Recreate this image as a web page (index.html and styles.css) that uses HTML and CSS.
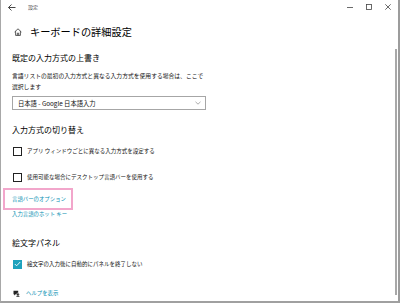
FILE: index.html
```html
<!DOCTYPE html>
<html lang="ja">
<head>
<meta charset="utf-8">
<link rel="stylesheet" href="styles.css">
</head>
<body>
<div class="window">
  <div class="titlebar">
    <svg class="back" width="8" height="7" viewBox="0 0 8 7"><path d="M0.5 3.5H7.5M3.5 0.5L0.5 3.5L3.5 6.5" fill="none" stroke="#333" stroke-width="0.9"/></svg>
    <span class="apptitle">設定</span>
    <div class="controls">
      <svg width="6" height="6" viewBox="0 0 6 6"><path d="M0 3.5H6" stroke="#444" stroke-width="0.8"/></svg>
      <svg width="6" height="6" viewBox="0 0 6 6"><rect x="0.5" y="0.5" width="5" height="5" fill="none" stroke="#444" stroke-width="0.8"/></svg>
      <svg width="6" height="6" viewBox="0 0 6 6"><path d="M0.3 0.3L5.7 5.7M5.7 0.3L0.3 5.7" stroke="#444" stroke-width="0.8"/></svg>
    </div>
  </div>
  <div class="body">
    <div class="content">
      <div class="header">
        <svg class="home" width="8" height="8" viewBox="0 0 8 8"><path d="M0.6 4L4 0.8L7.4 4M1.6 3.2V7.4H6.4V3.2M3.3 7.4V5.2H4.7V7.4" fill="none" stroke="#333" stroke-width="0.8"/></svg>
        <h1 class="pagetitle">キーボードの詳細設定</h1>
      </div>

      <h2 class="section first">既定の入力方式の上書き</h2>
      <p class="desc">言語リストの最初の入力方式と異なる入力方式を使用する場合は、ここで<br>選択します</p>
      <div class="select">
        <span>日本語 - Google 日本語入力</span>
        <svg width="6" height="4" viewBox="0 0 6 4"><path d="M0.5 0.8L3 3.2L5.5 0.8" fill="none" stroke="#888" stroke-width="0.7"/></svg>
      </div>

      <h2 class="section s2">入力方式の切り替え</h2>
      <div class="check c1"><span class="box"></span><span class="label">アプリ ウィンドウごとに異なる入力方式を設定する</span></div>
      <div class="check c2"><span class="box"></span><span class="label">使用可能な場合にデスクトップ言語バーを使用する</span></div>

      <div class="linkwrap">
        <a class="link l1">言語バーのオプション</a>
        <span class="highlight"></span>
      </div>
      <a class="link l2">入力言語のホット キー</a>

      <h2 class="section s3">絵文字パネル</h2>
      <div class="check c3"><span class="box checked"><svg width="7" height="6" viewBox="0 0 7 6"><path d="M0.8 3L2.6 4.8L6.2 1" fill="none" stroke="#fff" stroke-width="0.9"/></svg></span><span class="label">絵文字の入力後に自動的にパネルを終了しない</span></div>

      <div class="help">
        <svg width="7" height="7" viewBox="0 0 7 7"><path d="M0.5 0.8H5.2V4.2H2.6L1.2 5.4V4.2H0.5Z" fill="#222"/><circle cx="4.9" cy="4.3" r="1.3" fill="#222" stroke="#fff" stroke-width="0.5"/><path d="M3.2 6.8C3.4 5.9 4.1 5.5 4.9 5.5C5.7 5.5 6.4 5.9 6.6 6.8Z" fill="#222"/></svg>
        <a class="link">ヘルプを表示</a>
      </div>
    </div>
    <div class="scrolltrack"><div class="thumb"></div></div>
  </div>
</div>
</body>
</html>
```
FILE: styles.css
```css
* { box-sizing: border-box; }
html, body { margin: 0; padding: 0; background: #fff; }
body {
  width: 400px;
  height: 303px;
  overflow: hidden;
  font-family: "Noto Sans CJK JP", "Noto Sans", sans-serif;
  color: #111;
}
.window {
  width: 400px;
  height: 303px;
  border-left: 1px solid #a8a8a8;
  border-right: 2px solid #9c9c9c;
  border-bottom: 2px solid #a0a0a0;
  display: flex;
  flex-direction: column;
}
.titlebar {
  height: 14px;
  display: flex;
  align-items: center;
  flex-shrink: 0;
}
.back { margin-left: 7px; }
.apptitle {
  margin-left: 12px;
  font-size: 5px;
  line-height: 6px;
  color: #333;
}
.controls {
  margin-left: auto;
  display: flex;
  gap: 13px;
  margin-right: 7px;
}
.body {
  flex: 1;
  display: flex;
  min-height: 0;
}
.content {
  flex: 1;
  padding-left: 11px;
  display: flex;
  flex-direction: column;
  align-items: flex-start;
}
.scrolltrack {
  width: 3px;
  padding-top: 35px;
}
.thumb {
  width: 2px;
  height: 246px;
  background: #a8a8a8;
}
.header {
  display: flex;
  align-items: center;
  padding-top: 10px;
  height: 26px;
}
.home { margin-left: 2px; }
.pagetitle {
  margin: 0 0 0 8px;
  font-size: 10.2px;
  line-height: 16px;
  font-weight: 400;
  color: #000;
}
.section {
  margin: 0;
  font-size: 8px;
  line-height: 12px;
  font-weight: 400;
  color: #000;
}
.first { margin-top: 12px; }
.s2 { margin-top: 14px; }
.s3 { margin-top: 18px; }
.desc {
  margin: 5.5px 0 0;
  font-size: 5.8px;
  line-height: 11px;
  color: #111;
}
.select {
  margin-top: 4.5px;
  width: 194px;
  height: 14px;
  border: 1px solid #a6a6a6;
  display: flex;
  align-items: center;
  justify-content: space-between;
  padding: 0 4px 0 5px;
  font-size: 6.3px;
  color: #111;
}
.check {
  display: flex;
  align-items: center;
  height: 10px;
}
.c1 { margin-top: 10px; }
.c2 { margin-top: 16px; }
.c3 { margin-top: 10px; }
.box {
  width: 9px;
  height: 9px;
  border: 1px solid #222;
  margin-left: 1px;
  display: flex;
  align-items: center;
  justify-content: center;
}
.box.checked {
  background: #1ea2bd;
  border-color: #1ea2bd;
}
.label {
  margin-left: 5px;
  font-size: 5.5px;
  line-height: 10px;
  color: #111;
}
.link {
  font-size: 5.4px;
  line-height: 10px;
  color: #0890b2;
  display: block;
}
.linkwrap {
  position: relative;
  margin-top: 12px;
}
.highlight {
  position: absolute;
  left: -9px;
  top: -6px;
  width: 70px;
  height: 22px;
  border: 2px solid #f2a6cb;
}
.l2 { margin-top: 5px; }
.help {
  margin-top: 19px;
  display: flex;
  align-items: center;
  height: 10px;
}
.help svg { margin-left: 1px; }
.help .link { margin-left: 6px; }
```
